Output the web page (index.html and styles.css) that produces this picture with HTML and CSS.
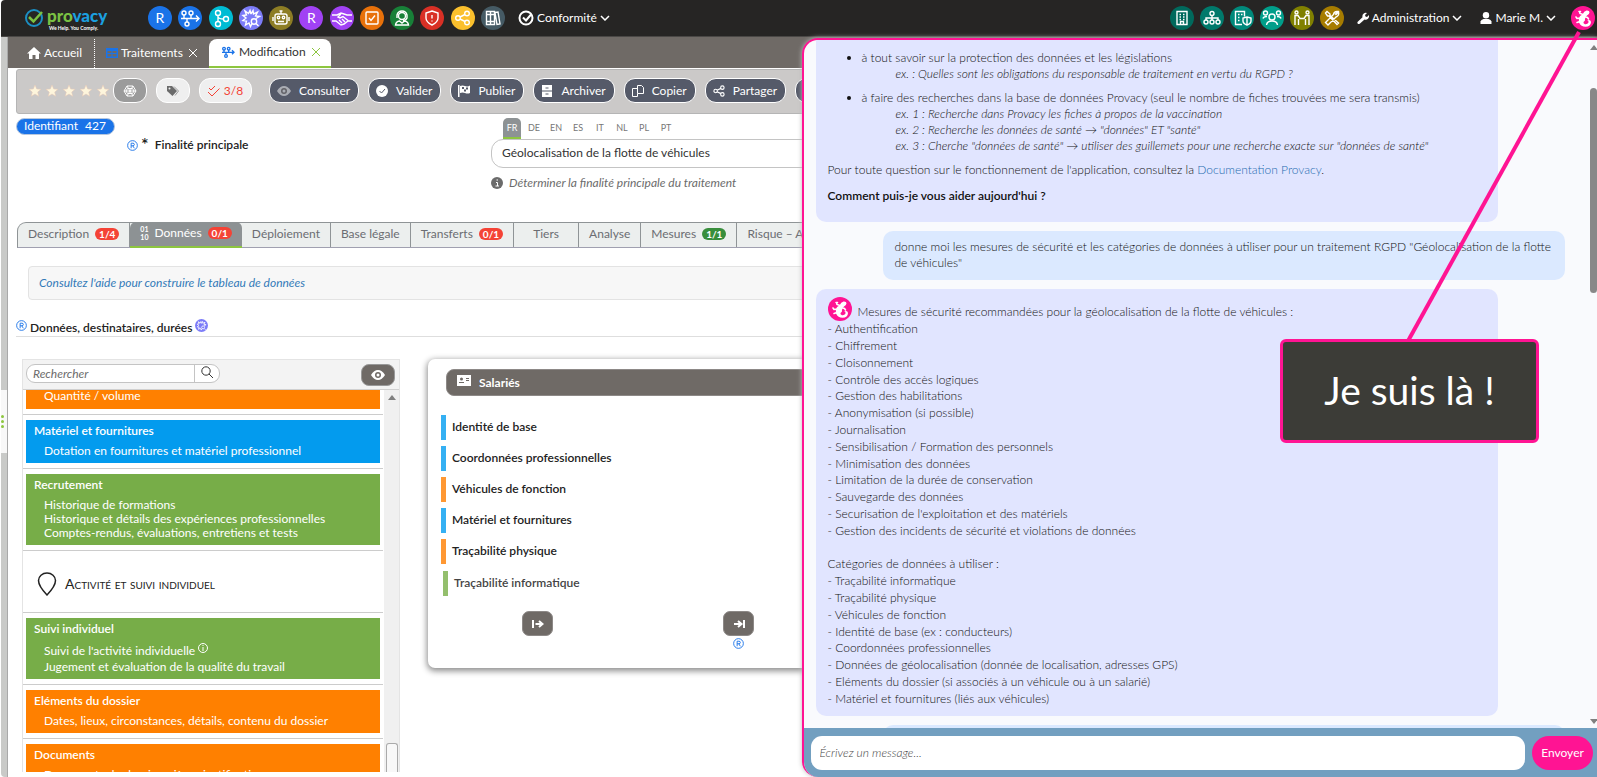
FILE: index.html
```html
<!DOCTYPE html>
<html lang="fr">
<head>
    <meta charset="UTF-8">
    <title>Provacy - Modification</title>
    <link rel="stylesheet" href="styles.css">
</head>
<body>
    <svg class="defs">
        <symbol id="i-flow" viewBox="0 0 24 24"><circle cx="6" cy="7" r="2"/><circle cx="13" cy="7" r="2"/><circle cx="9" cy="18" r="2"/><path d="M3 12.500h18M18 9.500l3 3-3 3M6 9v3M13 9v3M9 13v3"/></symbol>
        <symbol id="i-tree" viewBox="0 0 24 24"><circle cx="9" cy="7" r="2.500"/><circle cx="17" cy="13" r="2.500"/><circle cx="9" cy="18" r="2.500"/><path d="M9 9.500v6M9 11q1 2 5.500 2"/></symbol>
        <symbol id="i-gear" viewBox="0 0 24 24"><path d="M12 8l-1-3.500-1.500 3L6 5l1.500 4L4 9.500 7 12l-3 2.500 3.500.5-1 4 3.500-2 1.500 3.500 1.500-3M12 8l2-3.500.5 3.500 4-2-2 4 4 .5-3.500 2"/><circle cx="15" cy="15.500" r="2.700"/><path d="M17 17.500l2.500 2.500"/></symbol>
        <symbol id="i-robot" viewBox="0 0 24 24"><rect x="6" y="8" width="12" height="10" rx="2"/><circle cx="9.500" cy="11.500" r="1.200"/><circle cx="14.500" cy="11.500" r="1.200"/><path d="M9 15.500h6M12 8V5M4 11v4M20 11v4M10.500 5h3"/></symbol>
        <symbol id="i-hands" viewBox="0 0 24 24"><path d="M2 9h5l4-2 3 1 3 1h5M2 15h4l5 4 3-1 4-3h4M11 8l-3 3 2 1 3-1.500 5 4M9 14l3 3M12 13l3 3"/></symbol>
        <symbol id="i-check" viewBox="0 0 24 24"><rect x="6" y="6" width="12" height="12" rx="1"/><path d="M9 12l2 2.500 4-5"/></symbol>
        <symbol id="i-agent" viewBox="0 0 24 24"><circle cx="12" cy="10" r="3.500"/><path d="M7 12V9q1-4 5-4t5 4v3q-1 2.500-4 2.500M5.500 19q.5-3.500 4-4l2.500 2 2.500-2q3.500.5 4 4z"/></symbol>
        <symbol id="i-shield" viewBox="0 0 24 24"><path d="M12 5l6 2v5q0 4-6 7-6-3-6-7V7zM12 9v3.500M12 14.500v1"/></symbol>
        <symbol id="i-share" viewBox="0 0 24 24"><circle cx="7" cy="12" r="2.300"/><circle cx="16" cy="7.500" r="2.300"/><circle cx="16" cy="16.500" r="2.300"/><path d="M9 11l5-2.500M9 13l5 2.500"/></symbol>
        <symbol id="i-books" viewBox="0 0 24 24"><path d="M5.500 5.500h4v13h-4zM9.500 5.500h4v13h-4zM14 6.500l3-.5 2 12-3 .5zM5.500 8.500h8M5.500 15.500h8"/></symbol>
        <symbol id="i-building" viewBox="0 0 24 24"><path d="M7 5.500h10v13H7zM10.500 18.500v-3h3v3M9.500 8.500h1.500M13 8.500h1.500M9.500 11h1.500M13 11h1.500M9.500 13.500h1.500M13 13.500h1.500"/></symbol>
        <symbol id="i-org" viewBox="0 0 24 24"><circle cx="12" cy="7.500" r="2"/><circle cx="6" cy="16" r="2"/><circle cx="12" cy="16" r="2"/><circle cx="18" cy="16" r="2"/><path d="M12 9.500V14M6 14v-2h12v2"/></symbol>
        <symbol id="i-buildshield" viewBox="0 0 24 24"><path d="M12 18.500H5.500v-13h9v5M8 8.500h1.500M11 8.500h1.500M8 11.500h1.500M8 14.500h1.500M17 11l4 1v3q0 2.500-4 4-4-1.500-4-4v-3zM17 11v8"/></symbol>
        <symbol id="i-people" viewBox="0 0 24 24"><circle cx="12" cy="11" r="3"/><circle cx="5.500" cy="7" r="2"/><circle cx="18.500" cy="7" r="2"/><path d="M6.500 19q.5-4 5.500-4t5.500 4M3 12.500q.5-2 4-2M21 12.500q-.5-2-4-2"/></symbol>
        <symbol id="i-meet" viewBox="0 0 24 24"><circle cx="6.500" cy="6.500" r="1.500"/><circle cx="17.500" cy="6.500" r="1.500"/><path d="M5 19V9.500h3l2 3h4l2-3h3V19M8.500 19v-6M15.500 19v-6"/></symbol>
        <symbol id="i-tools" viewBox="0 0 24 24"><path d="M5.500 7L7 5.500l3 2.500v1.500l8.500 7.500-1.500 1.500L9 10H7.500zM18 5.500L15.500 8l.5.500L18.500 6q1 3.500-2.500 5L8 19l-2.500-2.500 8-8Q14 5 18 5.500z"/></symbol>
        <symbol id="i-gecko" viewBox="0 0 24 24"><circle cx="12" cy="12" r="12" fill="#ff1493" stroke="none"/><path fill="#fff" stroke="none" d="M11.500 8.500Q13 5 15.500 4.500q3-.2 3 1.800t-2.500 3.200Q14 11 14 13q.5 2-1.500 3-.5 1.500 1.500 2.200 2.500.3 3.500-1.700.5-2-1.500-2 3.500-1.500 4 1.500-.2 4.500-5.500 4.800-4.500 0-6.500-4.300-1-3.500 1-6.500z"/><path fill="none" stroke="#fff" stroke-width="1.600" stroke-linecap="round" d="M12 8.500L9 7.500 8.500 5.500M14.500 11l2 .5 1 1.500M9.500 12l-3.500.5-1-1.500M9 15.500L6 16.500M8 5.500h1.500"/></symbol>
        <symbol id="i-down" viewBox="0 0 10 6"><path d="M1 1l4 4 4-4"/></symbol>
        <symbol id="i-x" viewBox="0 0 8 8"><path d="M0 0l8 8M8 0L0 8"/></symbol>
        <symbol id="i-star" viewBox="0 0 14 14"><path d="M7 1l1.700 4 4.300.300-3.300 2.800 1 4.200L7 10l-3.700 2.300 1-4.200L1 5.300 5.300 5z"/></symbol>
        <symbol id="i-eye" viewBox="0 0 14 14"><path d="M0 7q3-5 7-5t7 5q-3 5-7 5T0 7z"/><circle cx="7" cy="7" r="3" fill="#6f6a66"/><circle cx="7" cy="7" r="1.500"/></symbol>
        <symbol id="i-reg" viewBox="0 0 12 12"><circle cx="6" cy="6" r="5.300"/><path d="M4.500 9V3.500h2q1.500 0 1.500 1.400T6.500 6.300h-2M6.300 6.300L8 9"/></symbol>
    </svg>

    <header class="navbar">
        <a class="logo" href="#">
            <svg class="logo-mark" viewBox="0 0 20 20"><circle cx="10" cy="10" r="8" fill="none" stroke="#1b8fc4" stroke-width="2"/><path d="M5 9l4.500 4.500L18 4" fill="none" stroke="#7ac143" stroke-width="2.500"/></svg>
            <span class="logo-text">
                <span class="logo-name"><b>pro</b>vacy</span>
                <span class="logo-tag">We Help. You Comply.</span>
            </span>
        </a>
        <nav class="modules">
            <a class="dot" style="background:#1a73e8">R</a>
            <a class="dot" style="background:#1a73e8"><svg><use href="#i-flow"/></svg></a>
            <a class="dot" style="background:#00bcd4"><svg><use href="#i-tree"/></svg></a>
            <a class="dot" style="background:#7c7cf8"><svg><use href="#i-gear"/></svg></a>
            <a class="dot" style="background:#8d7d24"><svg><use href="#i-robot"/></svg></a>
            <a class="dot" style="background:#a142f4">R</a>
            <a class="dot" style="background:#a142f4"><svg><use href="#i-hands"/></svg></a>
            <a class="dot" style="background:#e8710a"><svg><use href="#i-check"/></svg></a>
            <a class="dot" style="background:#188038"><svg><use href="#i-agent"/></svg></a>
            <a class="dot" style="background:#d93025"><svg><use href="#i-shield"/></svg></a>
            <a class="dot" style="background:#fbc02d"><svg><use href="#i-share"/></svg></a>
            <a class="dot" style="background:#455a64"><svg><use href="#i-books"/></svg></a>
        </nav>
        <button class="menu" type="button">
            <svg class="ico16" viewBox="0 0 16 16"><circle cx="8" cy="8" r="6.500" fill="none" stroke="#fff" stroke-width="2"/><path d="M5 7.500l3 3 5-6" fill="none" stroke="#fff" stroke-width="2"/></svg>
            Conformité
            <svg class="chev"><use href="#i-down"/></svg>
        </button>
        <nav class="admin-modules">
            <a class="dot" style="background:#00695c"><svg><use href="#i-building"/></svg></a>
            <a class="dot" style="background:#00796b"><svg><use href="#i-org"/></svg></a>
            <a class="dot" style="background:#00897b"><svg><use href="#i-buildshield"/></svg></a>
            <a class="dot" style="background:#009e8a"><svg><use href="#i-people"/></svg></a>
            <a class="dot" style="background:#808000"><svg><use href="#i-meet"/></svg></a>
            <a class="dot" style="background:#a67c00"><svg><use href="#i-tools"/></svg></a>
        </nav>
        <button class="menu menu-admin" type="button">
            <svg class="ico12" viewBox="0 0 12 12"><path fill="#fff" d="M1 9.500l4.500-4.200Q5 3 6.500 1.700T10 1L8 3l.5 1.500 1.500.5 2-2q.5 2.300-1 3.700T7.500 7.500L3 11.500Q1.500 12.500.7 11.500T1 9.500z"/></svg>
            Administration
            <svg class="chev"><use href="#i-down"/></svg>
        </button>
        <button class="menu menu-user" type="button">
            <svg class="ico12" viewBox="0 0 12 12"><circle cx="6" cy="3.200" r="3.200" fill="#fff"/><path fill="#fff" d="M.5 12V9.500Q1 7.500 3.500 7h5q2.500.5 3 2.500V12z"/></svg>
            Marie M.
            <svg class="chev"><use href="#i-down"/></svg>
        </button>
        <button class="bot" type="button" aria-label="Assistant"><svg><use href="#i-gecko"/></svg></button>
    </header>

    <div class="layout">
        <aside class="rail"><span class="grip"><i></i><i></i><i></i></span></aside>
        <main class="page">
            <nav class="windows">
                <a class="win">
                    <svg class="ico14" viewBox="0 0 14 14"><path fill="#fff" d="M7 1L0 7.500h2V13h3.500V9h3v4H12V7.500h2z"/></svg>
                    Accueil
                </a>
                <a class="win win-list">
                    <svg class="ico12" viewBox="0 0 12 12"><path fill="#1a73e8" fill-rule="evenodd" d="M0 1h12v10H0zM1.500 4v2h4V4zM6.500 4v2h4V4zM1.500 7v2.500h4V7zM6.500 7v2.500h4V7z"/></svg>
                    Traitements
                    <svg class="close"><use href="#i-x"/></svg>
                </a>
                <a class="win win-active">
                    <svg class="flow"><use href="#i-flow"/></svg>
                    Modification
                    <svg class="close"><use href="#i-x"/></svg>
                </a>
            </nav>

            <div class="toolbar">
                <span class="stars"><svg><use href="#i-star"/></svg><svg><use href="#i-star"/></svg><svg><use href="#i-star"/></svg><svg><use href="#i-star"/></svg><svg><use href="#i-star"/></svg></span>
                <button class="chip chip-dark" type="button" aria-label="Réseau"><svg class="ico14" viewBox="0 0 14 14"><path fill="none" stroke="#fff" d="M4 2h6l3 5-3 5H4L1 7zM4 2l6 10M10 2L4 12M1 7h12M4.500 4.500h5L11 7 9.500 9.500h-5L3 7z"/></svg></button>
                <button class="chip" type="button" aria-label="Étiquettes"><svg class="ico12" viewBox="0 0 12 12"><path fill="#6b6b6b" d="M0 1h5l5 5-4.500 5L0 6z"/><path fill="none" stroke="#999" d="M7 1.500L11.500 6 8 10.500"/><circle cx="2.500" cy="3.500" r="1" fill="#eee"/></svg></button>
                <button class="chip chip-count" type="button"><svg class="ico12" viewBox="0 0 12 12"><path fill="none" stroke="#f44336" d="M1 3l2 2 4-4M0 7l4 4 7.500-7.500"/></svg>3/8</button>
                <button class="act act-first" type="button"><svg class="ico14 faded"><use href="#i-eye"/></svg>Consulter</button>
                <button class="act" type="button"><svg class="ico12" viewBox="0 0 12 12"><circle cx="6" cy="6" r="6" fill="#fff"/><path d="M3.500 6l2 2 3.500-4" fill="none" stroke="#555a69"/></svg>Valider</button>
                <button class="act" type="button"><svg class="ico12" viewBox="0 0 12 12"><path fill="#fff" d="M0 0h1.500v12H0zM2 1q2.500-1 5 0t5-.5V8q-2.500 1-5 0T2 8z"/><path fill="#555a69" d="M4 2h2v2H4zM8 2.500h2v2H8zM6 4.500h2v2H6z"/></svg>Publier</button>
                <button class="act" type="button"><svg class="ico12" viewBox="0 0 12 12"><path fill="#fff" d="M1 0h10v12H1z"/><path stroke="#555a69" d="M1 6h10M4.500 3h3M4.500 9h3"/></svg>Archiver</button>
                <button class="act" type="button"><svg class="ico12" viewBox="0 0 12 12"><path fill="none" stroke="#fff" d="M5.500.5h4l2 2v6h-6zM5.500 3.500h-5v8h5v-3"/></svg>Copier</button>
                <button class="act" type="button"><svg class="ico12 line" viewBox="4 4 15 16"><use href="#i-share" width="24" height="24"/></svg>Partager</button>
                <button class="act" type="button"><svg class="ico12" viewBox="0 0 12 12"><circle cx="6" cy="6" r="5" fill="none" stroke="#fff"/></svg></button>
            </div>

            <section class="record">
                <span class="ident">Identifiant <span>427</span></span>
                <div class="field-row">
                    <label class="field-label" for="finalite"><svg class="reg"><use href="#i-reg"/></svg><span class="req">*</span> Finalité principale</label>
                    <div class="field">
                        <div class="langs">
                            <a class="on">FR</a><a>DE</a><a>EN</a><a>ES</a><a>IT</a><a>NL</a><a>PL</a><a>PT</a>
                        </div>
                        <input id="finalite" type="text" value="Géolocalisation de la flotte de véhicules">
                        <p class="hint"><svg class="ico12" viewBox="0 0 12 12"><circle cx="6" cy="6" r="6" fill="#6b6b6b"/><path d="M5 5.500h1.500V9M4.500 9h3.500M5.500 3h1.500" fill="none" stroke="#fff"/></svg>Déterminer la finalité principale du traitement</p>
                    </div>
                </div>
            </section>

            <nav class="tabs">
                <a class="tab">Description <span class="badge">1/4</span></a>
                <a class="tab tab-on"><span class="bits">01<br>10</span> Données <span class="badge">0/1</span></a>
                <a class="tab">Déploiement</a>
                <a class="tab">Base légale</a>
                <a class="tab">Transferts <span class="badge">0/1</span></a>
                <a class="tab tab-short">Tiers</a>
                <a class="tab">Analyse</a>
                <a class="tab">Mesures <span class="badge badge-ok">1/1</span></a>
                <a class="tab">Risque – AIPD</a>
            </nav>

            <p class="help-box"><a href="#">Consultez l'aide pour construire le tableau de données</a></p>

            <h2 class="section-title"><svg class="reg"><use href="#i-reg"/></svg>Données, destinataires, durées<svg class="ia"><use href="#i-gear"/></svg></h2>

            <div class="board">
                <section class="catalog">
                    <div class="catalog-head">
                        <div class="search">
                            <input type="text" placeholder="Rechercher" aria-label="Rechercher">
                            <button type="button" aria-label="Lancer la recherche"><svg class="ico12" viewBox="0 0 12 12"><circle cx="5" cy="5" r="4.200" fill="none" stroke="#333"/><path d="M8 8l4 4" stroke="#333"/></svg></button>
                        </div>
                        <button class="eye" type="button" aria-label="Afficher"><svg class="ico14"><use href="#i-eye"/></svg></button>
                    </div>
                    <div class="catalog-body">
                        <div class="catalog-list">
                            <article class="cat orange cat-cut"><p>Quantité / volume</p></article>
                            <article class="cat blue"><h3>Matériel et fournitures</h3><p>Dotation en fournitures et matériel professionnel</p></article>
                            <article class="cat green"><h3>Recrutement</h3><p>Historique de formations</p><p>Historique et détails des expériences professionnelles</p><p>Comptes-rendus, évaluations, entretiens et tests</p></article>
                            <h3 class="group"><svg viewBox="0 0 20 24"><path fill="none" stroke="#222" stroke-width="1.500" d="M10 23Q1.500 14 1.500 8.500a8.500 7.500 0 0 1 17 0Q18.500 14 10 23z"/></svg>Activité et suivi individuel</h3>
                            <article class="cat green"><h3>Suivi individuel</h3><p class="with-info">Suivi de l'activité individuelle <svg viewBox="0 0 10 10"><circle cx="5" cy="5" r="4.500"/><path d="M5 4v4M5 2v1"/></svg></p><p>Jugement et évaluation de la qualité du travail</p></article>
                            <article class="cat orange"><h3>Eléments du dossier</h3><p>Dates, lieux, circonstances, détails, contenu du dossier</p></article>
                            <article class="cat orange"><h3>Documents</h3><p>Documents du dossier, pièces justificatives</p></article>
                        </div>
                        <div class="bar"><i class="up"></i><i class="thumb"></i></div>
                    </div>
                </section>

                <section class="people">
                    <h3 class="people-head"><svg viewBox="0 0 14 12"><path fill="#fff" d="M0 0h14v11H0z"/><circle cx="4.500" cy="4" r="1.500" fill="#6f6a66"/><path stroke="#6f6a66" d="M2 7.500h5M9 3.500h3M9 5.500h3"/></svg>Salariés</h3>
                    <ul class="cats">
                        <li class="c-blue">Identité de base</li>
                        <li class="c-blue">Coordonnées professionnelles</li>
                        <li class="c-orange">Véhicules de fonction</li>
                        <li class="c-blue">Matériel et fournitures</li>
                        <li class="c-orange">Traçabilité physique</li>
                        <li class="c-green">Traçabilité informatique</li>
                    </ul>
                    <div class="moves">
                        <div><button type="button" aria-label="Sources"><svg viewBox="0 0 12 10"><path d="M1 1v8M3.500 5H10M7 2l3.500 3L7 8"/></svg></button></div>
                        <div><button type="button" aria-label="Destinataires"><svg viewBox="0 0 12 10"><path d="M11 1v8M1 5h7M5 2l3.500 3L5 8"/></svg></button><svg class="reg"><use href="#i-reg"/></svg></div>
                    </div>
                </section>
            </div>
        </main>
    </div>

    <aside class="chat">
        <div class="chat-body">
            <div class="messages">
                <div class="msg bot-msg">
                    <ul>
                        <li>à tout savoir sur la protection des données et les législations
                            <em>ex. : Quelles sont les obligations du responsable de traitement en vertu du RGPD ?</em></li>
                        <li>à faire des recherches dans la base de données Provacy (seul le nombre de fiches trouvées me sera transmis)
                            <em>ex. 1 : Recherche dans Provacy les fiches à propos de la vaccination</em>
                            <em>ex. 2 : Recherche les données de santé → "données" ET "santé"</em>
                            <em>ex. 3 : Cherche "données de santé" → utiliser des guillemets pour une recherche exacte sur "données de santé"</em></li>
                    </ul>
                    <p>Pour toute question sur le fonctionnement de l'application, consultez la <a href="#">Documentation Provacy</a>.</p>
                    <p><b>Comment puis-je vous aider aujourd'hui ?</b></p>
                </div>
                <div class="msg user-msg">donne moi les mesures de sécurité et les catégories de données à utiliser pour un traitement RGPD "Géolocalisation de la flotte de véhicules"</div>
                <div class="msg bot-msg">
                    <div class="lead"><svg><use href="#i-gecko"/></svg>Mesures de sécurité recommandées pour la géolocalisation de la flotte de véhicules :</div>
                    - Authentification<br>
                    - Chiffrement<br>
                    - Cloisonnement<br>
                    - Contrôle des accès logiques<br>
                    - Gestion des habilitations<br>
                    - Anonymisation (si possible)<br>
                    - Journalisation<br>
                    - Sensibilisation / Formation des personnels<br>
                    - Minimisation des données<br>
                    - Limitation de la durée de conservation<br>
                    - Sauvegarde des données<br>
                    - Securisation de l'exploitation et des matériels<br>
                    - Gestion des incidents de sécurité et violations de données<br>
                    <br>
                    Catégories de données à utiliser :<br>
                    - Traçabilité informatique<br>
                    - Traçabilité physique<br>
                    - Véhicules de fonction<br>
                    - Identité de base (ex : conducteurs)<br>
                    - Coordonnées professionnelles<br>
                    - Données de géolocalisation (donnée de localisation, adresses GPS)<br>
                    - Eléments du dossier (si associés à un véhicule ou à un salarié)<br>
                    - Matériel et fournitures (liés aux véhicules)
                </div>
                <div class="msg user-msg">&nbsp;</div>
            </div>
            <div class="chat-bar"><i class="up"></i><i class="thumb"></i><i class="down"></i></div>
        </div>
        <form class="chat-form">
            <input type="text" placeholder="Écrivez un message..." aria-label="Écrivez un message">
            <button type="button">Envoyer</button>
        </form>
    </aside>

    <svg class="pointer" viewBox="0 0 200 320"><path d="M182 2L11 311"/></svg>
    <div class="callout">Je suis là !</div>
</body>
</html>
```
FILE: styles.css
```css
*{
    box-sizing:border-box;
    margin:0;
    padding:0;
}
body{
    height:100vh;
    display:flex;
    flex-direction:column;
    position:relative;
    overflow:hidden;
    padding-left:1px;
    background:#fff;
    color:#333;
    font-family:Lato, "Open Sans", sans-serif;
    font-size:12px;
    line-height:16px;
}
a{
    color:inherit;
    text-decoration:none;
}
ul{
    list-style:none;
}
button,input{
    font:inherit;
    color:inherit;
    border:0;
    background:none;
}
svg{
    flex:none;
}
.defs{
    display:none;
}
.ico12{
    width:12px;
    height:12px;
}
.ico14{
    width:14px;
    height:14px;
}
.ico16{
    width:16px;
    height:16px;
}

/* navbar */
.navbar{
    flex:none;
    height:37px;
    display:flex;
    align-items:center;
    padding:0 2px 0 23px;
    background:#262524;
    border-bottom:1px solid #4a4846;
    border-top-left-radius:4px;
    color:#fff;
}
.logo{
    display:flex;
    align-items:center;
    gap:3px;
    width:124px;
}
.logo-mark{
    width:20px;
    height:20px;
}
.logo-text{
    display:flex;
    flex-direction:column;
}
.logo-name{
    font-size:17px;
    line-height:19px;
    font-weight:900;
    color:#1ba0e0;
}
.logo-name b{
    color:#7ac143;
}
.logo-tag{
    padding-left:2px;
    font-size:5px;
    line-height:6px;
    font-weight:700;
}
.modules{
    display:flex;
    justify-content:space-between;
    width:357px;
}
.admin-modules{
    display:flex;
    gap:6px;
    margin-left:auto;
}
.dot{
    width:24px;
    height:24px;
    border-radius:50%;
    display:flex;
    align-items:center;
    justify-content:center;
    font-size:14px;
}
.dot svg{
    width:24px;
    height:24px;
    fill:none;
    stroke:#fff;
    stroke-width:1.4;
}
.menu{
    display:flex;
    align-items:center;
    gap:3px;
    margin-left:13px;
}
.menu-user{
    margin-left:18px;
}
.chev{
    width:10px;
    height:6px;
    fill:none;
    stroke:#fff;
    stroke-width:1.5;
}
.bot{
    margin-left:15px;
    height:24px;
}
.bot svg{
    width:24px;
    height:24px;
}

/* left rail */
.layout{
    flex:1;
    min-height:0;
    display:flex;
}
.rail{
    flex:none;
    width:7px;
    background:#c9cac8;
    border-right:1px solid #a9a9a9;
    display:flex;
    flex-direction:column;
    border-bottom-left-radius:4px;
}
.grip{
    height:63px;
    margin-top:353px;
    background:#f8f8f8;
    display:flex;
    flex-direction:column;
    justify-content:center;
    gap:2px;
}
.grip i{
    width:3px;
    height:3px;
    background:#8dc63f;
    border-radius:50%;
}
.page{
    flex:1;
    min-width:0;
    overflow:hidden;
}

/* open windows */
.windows{
    display:flex;
    height:31px;
    padding-top:2px;
    background:#6f6a66;
    color:#fff;
}
.win{
    display:flex;
    align-items:center;
    gap:3px;
    padding:0 12px 2px 19px;
}
.win-list{
    padding:0 12px 2px 11px;
    border-left:1px dotted #fff;
}
.close{
    width:8px;
    height:8px;
    margin-left:3px;
    stroke:currentColor;
}
.win-active{
    padding:0 11px 2px;
    background:#fff;
    color:#333;
    border-radius:8px 8px 0 0;
    border-bottom:2px solid #8dc63f;
}
.win-active .close{
    color:#8dc63f;
}
.flow{
    width:16px;
    height:16px;
    fill:none;
    stroke:#1a73e8;
    stroke-width:2;
}

/* toolbar */
.toolbar{
    display:flex;
    align-items:center;
    gap:9px;
    height:45px;
    margin:1px 0 0 8px;
    padding:0 0 2px 11px;
    background:#cbc9c8;
    border:1px solid #b5b5b5;
    border-radius:3px 0 0 3px;
    white-space:nowrap;
}
.stars{
    display:flex;
    gap:3px;
    margin-right:-6px;
}
.stars svg{
    width:14px;
    height:14px;
    fill:#fdf5dc;
    stroke:#e9c9b5;
    stroke-width:.5;
}
.chip{
    height:25px;
    width:34px;
    display:flex;
    align-items:center;
    justify-content:center;
    background:#efefef;
    border:1px solid #fff;
    border-radius:11px;
}
.chip-dark{
    background:#9b9b9b;
}
.chip-count{
    width:53px;
    gap:4px;
    color:#f44336;
}
.act{
    flex:none;
    height:25px;
    display:flex;
    align-items:center;
    gap:8px;
    padding:0 8px 0 7px;
    background:#555a69;
    border:1px solid #fff;
    border-radius:11px;
    color:#fff;
}
.act-first{
    margin-left:8px;
}
.faded{
    opacity:.5;
}
.act svg{
    fill:#fff;
}
.act .line{
    fill:none;
    stroke:#fff;
    stroke-width:1.5;
}

/* record */
.record{
    padding:4px 0 0 8px;
}
.ident{
    display:block;
    width:99px;
    height:17px;
    padding-left:7px;
    background:#1a73e8;
    border-radius:9px;
    border:1px solid #b8c8dd;
    color:#fff;
    line-height:14px;
    white-space:nowrap;
}
.ident span{
    margin-left:4px;
}
.field-row{
    display:flex;
    margin-top:-17px;
}
.field-label{
    flex:none;
    width:475px;
    padding:19px 0 0 111px;
    color:#222;
    font-weight:600;
}
.reg{
    width:11px;
    height:11px;
    fill:none;
    stroke:#1a73e8;
    vertical-align:-2px;
}
.req{
    margin:0 3px;
    font-size:18px;
    line-height:12px;
    vertical-align:-2px;
}
.field{
    flex:1;
}
.langs{
    display:flex;
    gap:4px;
    padding-left:12px;
    font-size:9px;
    color:#777;
}
.langs a{
    width:18px;
    height:21px;
    line-height:19px;
    text-align:center;
}
.langs .on{
    background:#8d9294;
    border-bottom:2px solid #8dc63f;
    border-radius:5px 5px 0 0;
    color:#fff;
}
.field input{
    display:block;
    width:100%;
    height:29px;
    padding:0 10px 2px;
    border:1px solid #c4c4c4;
    border-radius:12px;
}
.hint{
    display:flex;
    align-items:center;
    gap:6px;
    margin-top:7px;
    color:#6b6b6b;
    font-style:italic;
}

/* tabs */
.tabs{
    display:flex;
    height:26px;
    margin:31px 0 0 9px;
    background:#ecefee;
    border:1px solid #8f9496;
    border-bottom-color:#a0a0b0;
    border-top-left-radius:9px;
    color:#6b6d72;
    white-space:nowrap;
}
.tab{
    flex:none;
    display:flex;
    align-items:center;
    justify-content:center;
    gap:6px;
    padding:0 10px 2px;
    border-right:1px solid #8f9496;
}
.tab-short{
    width:65px;
}
.tab-on{
    height:26px;
    margin-top:-1px;
    background:#8d9294;
    border-bottom:2px solid #8dc63f;
    border-right:0;
    border-radius:6px 6px 0 0;
    color:#fff;
}
.bits{
    font-size:7px;
    line-height:8px;
    font-weight:700;
}
.badge{
    height:12px;
    padding:0 4px;
    background:#f44336;
    border-radius:6px;
    color:#fff;
    font-size:10px;
    line-height:12px;
    font-weight:700;
}
.badge-ok{
    background:#388e3c;
}

.help-box{
    height:34px;
    margin:18px 0 0 20px;
    padding:0 10px;
    background:#f7f7f7;
    border:1px solid #e3e3e3;
    border-radius:4px;
    color:#337ab7;
    font-style:italic;
    line-height:32px;
}
.section-title{
    display:flex;
    align-items:center;
    gap:3px;
    height:17px;
    margin:20px 0 22px 8px;
    border-bottom:1px solid #dedede;
    color:#222;
    font-size:12px;
    font-weight:600;
}
.section-title svg{
    margin-bottom:6px;
}
.ia{
    width:13px;
    height:13px;
    background:#7c7cf8;
    border-radius:50%;
    fill:none;
    stroke:#fff;
    stroke-width:1.5;
}

/* board */
.board{
    display:flex;
    gap:28px;
    padding-left:14px;
}
.catalog{
    flex:none;
    width:378px;
    height:413px;
    display:flex;
    flex-direction:column;
    border:1px solid #e4e4e4;
    border-bottom:0;
}
.catalog-head{
    flex:none;
    height:30px;
    display:flex;
    justify-content:space-between;
    padding:4px 4px 0 3px;
    background:#f3f3f3;
    border-bottom:1px solid #d0d0d0;
}
.search{
    display:flex;
    width:194px;
    height:19px;
    background:#fff;
    border:1px solid #c4c4c4;
    border-radius:9px;
}
.search input{
    flex:1;
    min-width:0;
    padding:0 6px;
    font-style:italic;
}
.search input::placeholder{
    color:#6b6b6b;
}
.search button{
    width:25px;
    border-left:1px solid #c4c4c4;
}
.eye{
    width:34px;
    height:22px;
    background:#6f6a66;
    border:1px solid #999;
    border-radius:8px;
}
.eye svg{
    display:block;
    margin:0 auto;
    fill:#fff;
}
.catalog-body{
    flex:1;
    min-height:0;
    display:flex;
}
.catalog-list{
    flex:1;
    overflow:hidden;
    margin-right:1px;
}
.cat{
    position:relative;
    margin:5px 3px 11px;
    padding:3px 0 5px 8px;
    color:#fff;
}
.cat:after{
    content:"";
    position:absolute;
    left:-3px;
    right:-3px;
    bottom:-6px;
    height:1px;
    background:#ccc;
}
.cat h3{
    margin-bottom:6px;
    font-size:12px;
    line-height:15px;
    font-weight:600;
}
.cat p{
    padding-left:10px;
    line-height:14px;
}
.cat-cut{
    margin-top:0;
    padding:0 0 8px 8px;
}
.cat-cut p{
    line-height:11px;
}
.cat .with-info{
    line-height:18px;
}
.with-info svg{
    width:10px;
    height:10px;
    fill:none;
    stroke:#fff;
    vertical-align:2px;
}
.orange{
    background:#ff8000;
}
.blue{
    background:#039bee;
}
.green{
    background:#77ad48;
}
.group{
    display:flex;
    align-items:center;
    gap:8px;
    height:57px;
    margin-bottom:5px;
    padding-left:14px;
    border-bottom:1px solid #ccc;
    color:#222;
    font-size:14px;
    font-weight:400;
    font-variant:small-caps;
}
.group svg{
    width:20px;
    height:24px;
}
.bar{
    flex:none;
    width:15px;
    background:#f0f0f0;
    display:flex;
    flex-direction:column;
    justify-content:space-between;
    align-items:center;
}
.up,.down{
    border:4px solid transparent;
}
.up{
    margin-top:1px;
    border-bottom:5px solid #808080;
}
.down{
    border-top:5px solid #808080;
}
.bar .thumb{
    width:12px;
    height:29px;
    background:#f8f8f8;
    border:1px solid #aaa;
    border-bottom:0;
    border-radius:3px 3px 0 0;
}

/* data subjects */
.people{
    flex:1;
    height:309px;
    padding:10px 0 0 9px;
    background:#fff;
    border-radius:7px 0 0 7px;
    box-shadow:0 2px 6px 1px #8c8c8c;
}
.people-head{
    display:flex;
    align-items:center;
    gap:8px;
    height:27px;
    margin-left:9px;
    padding-left:10px;
    background:#6f6a66;
    border:1px solid #8d8987;
    border-radius:8px 0 0 8px;
    color:#fff;
    font-size:12px;
}
.people-head svg{
    width:14px;
    height:12px;
    margin-bottom:4px;
}
.cats{
    display:flex;
    flex-direction:column;
    gap:6px;
    padding:19px 0 0 4px;
}
.cats li{
    height:25px;
    padding-left:6px;
    border-left:5px solid #35b0f3;
    color:#222;
    font-weight:600;
    line-height:24px;
}
.cats .c-orange{
    border-color:#ff9833;
}
.cats .c-green{
    margin:1px 0 0 2px;
    border-color:#94bf6d;
    color:#444;
}
.moves{
    display:flex;
    padding-top:15px;
}
.moves div{
    width:201px;
    display:flex;
    flex-direction:column;
    align-items:center;
    gap:2px;
}
.moves button{
    width:31px;
    height:25px;
    background:#6f6a66;
    border:1px solid #8d8987;
    border-radius:7px;
}
.moves button svg{
    display:block;
    width:12px;
    height:10px;
    margin:0 auto;
    fill:none;
    stroke:#fff;
    stroke-width:2;
}

/* assistant */
.chat{
    position:absolute;
    top:38px;
    right:0;
    bottom:0;
    width:calc(50% - 3px);
    display:flex;
    flex-direction:column;
    overflow:hidden;
    background:#f9fafd;
    border:2px solid #ff1493;
    border-width:2px 0 0 2px;
    border-radius:16px 0 0 16px;
    box-shadow:0 0 5px #bbb;
    color:#111;
    font-weight:300;
}
.chat-body{
    flex:1;
    min-height:0;
    display:flex;
}
.messages{
    flex:1;
    display:flex;
    flex-direction:column;
    gap:9px;
    overflow:hidden;
    padding:0 25px 0 12px;
}
.msg{
    flex:none;
    padding:8px 12px;
    border-radius:10px;
    line-height:1.4;
}
.bot-msg{
    margin-right:67px;
    background:#e1e5ff;
}
.user-msg{
    margin-left:67px;
    background:#dbe9ff;
}
.bot-msg:first-child{
    padding:10px 12px 17px;
    border-radius:0 0 10px 10px;
}
.msg ul{
    list-style:disc;
    padding-left:34px;
    line-height:16px;
}
.msg li{
    margin-bottom:8px;
}
.msg em{
    display:block;
    padding-left:34px;
}
.msg p + p{
    margin-top:9px;
}
.msg b{
    font-weight:600;
}
.msg a{
    color:#1f6cb0;
}
.lead svg{
    width:24px;
    height:24px;
    margin-right:6px;
    vertical-align:-5px;
}
.chat-bar{
    flex:none;
    width:7px;
    display:flex;
    flex-direction:column;
    align-items:center;
    overflow:hidden;
}
.chat-bar .thumb{
    width:7px;
    height:205px;
    margin:38px 0 auto;
    background:#888;
    border-radius:4px;
}
.chat-form{
    flex:none;
    height:49px;
    display:flex;
    gap:7px;
    padding:8px 4px 7px 7px;
    background:#729fc0;
}
.chat-form input{
    flex:1;
    padding:0 9px;
    background:#fff;
    border-radius:11px;
}
.chat-form input::placeholder{
    color:#444;
    font-style:italic;
}
.chat-form button{
    width:61px;
    background:#ff1493;
    border-radius:17px;
    color:#fff;
    font-weight:400;
}

/* callout */
.pointer{
    position:absolute;
    top:30px;
    right:0;
    width:200px;
    height:320px;
    fill:none;
    stroke:#ff1493;
    stroke-width:4;
}
.callout{
    position:absolute;
    top:339px;
    right:58px;
    width:259px;
    height:104px;
    background:#3c3c37;
    border:3px solid #ff1493;
    border-radius:6px;
    color:#fff;
    font-size:39px;
    font-weight:400;
    line-height:96px;
    text-align:center;
}
```
